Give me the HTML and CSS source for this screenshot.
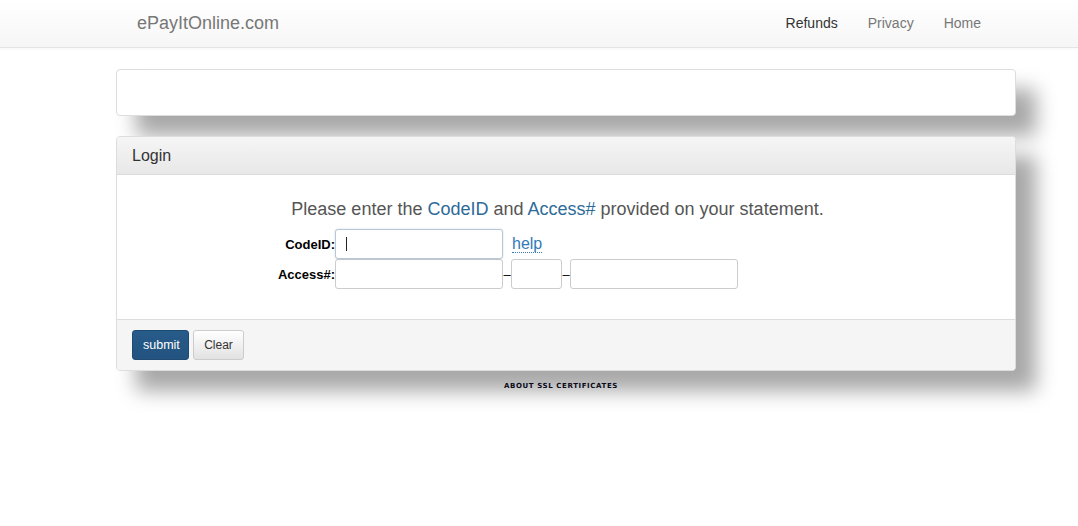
FILE: index.html
```html
<!DOCTYPE html>
<html>
<head>
<meta charset="utf-8">
<title>ePayItOnline.com</title>
<link rel="stylesheet" href="styles.css">
</head>
<body>
<nav class="navbar">
  <div class="nav-inner">
    <a class="brand" href="#">ePayItOnline.com</a>
    <ul class="nav-links">
      <li><a class="active" href="#">Refunds</a></li>
      <li><a href="#">Privacy</a></li>
      <li><a href="#">Home</a></li>
    </ul>
  </div>
</nav>
<main class="container">
  <div class="panel panel-empty"></div>
  <div class="panel panel-login">
    <div class="panel-heading">Login</div>
    <div class="panel-body">
      <p class="intro">Please enter the <span class="hl">CodeID</span> and <span class="hl">Access#</span> provided on your statement.</p>
      <div class="form-grid">
        <label class="lbl" for="codeid">CodeID:</label>
        <div class="row">
          <span class="caret-wrap"><input id="codeid" class="inp inp-focus inp-wide" type="text"><span class="caret"></span></span>
          <a class="help" href="#">help</a>
        </div>
        <label class="lbl" for="acc1">Access#:</label>
        <div class="row">
          <input id="acc1" class="inp inp-wide" type="text"><span class="dash">–</span><input class="inp inp-small" type="text"><span class="dash">–</span><input class="inp inp-wide" type="text">
        </div>
      </div>
    </div>
    <div class="panel-footer">
      <button class="btn btn-primary">submit</button><button class="btn btn-default">Clear</button>
    </div>
  </div>
  <div class="ssl">ABOUT SSL CERTIFICATES</div>
</main>
</body>
</html>
```
FILE: styles.css
```css
* { box-sizing: border-box; }
html, body { margin: 0; padding: 0; background: #fff; }
html, body { min-height: 526px; }
body { font-family: "Liberation Sans", Arial, sans-serif; font-size: 14px; color: #333; }

.navbar {
  height: 48px;
  background: linear-gradient(to bottom, #ffffff 0%, #f6f6f6 100%);
  border-bottom: 1px solid #e4e4e4;
  box-shadow: 0 1px 3px rgba(0,0,0,0.04);
}
.nav-inner {
  width: 900px;
  margin-left: 116px;
  height: 47px;
  display: flex;
  align-items: center;
  justify-content: space-between;
}
.brand {
  padding-left: 21px;
  font-size: 18px;
  color: #777;
  text-decoration: none;
  margin-top: -1px;
}
.nav-links {
  list-style: none;
  margin: -1px 0 0 0;
  padding: 0 20px 0 0;
  display: flex;
}
.nav-links a {
  display: block;
  padding: 0 15px;
  font-size: 14px;
  color: #777;
  text-decoration: none;
}
.nav-links a.active { color: #333; }

.container {
  width: 900px;
  margin-left: 116px;
  padding-top: 21px;
  padding-bottom: 100px;
}
.panel {
  background: #fff;
  border: 1px solid #ddd;
  border-radius: 4px;
  box-shadow: 20px 20px 20px #a8a8a8;
}
.panel-empty { height: 47px; margin-bottom: 20px; }
.panel-heading {
  height: 38px;
  padding: 0 15px;
  display: flex;
  align-items: center;
  font-size: 16px;
  color: #333;
  background: linear-gradient(to bottom, #f5f5f5 0%, #e8e8e8 100%);
  border-bottom: 1px solid #ddd;
  border-radius: 3px 3px 0 0;
}
.panel-body {
  height: 144px;
  padding-top: 24px;
}
.intro {
  margin: 0 0 10px 0;
  text-align: center;
  font-size: 18px;
  line-height: 20px;
  color: #555;
  padding-right: 17px;
}
.intro .hl { color: #2d6a98; }

.form-grid {
  margin-left: 159px;
  display: grid;
  grid-template-columns: 59px auto;
  align-items: center;
}
.lbl {
  text-align: right;
  font-weight: bold;
  font-size: 13px;
  color: #000;
}
.row { display: flex; align-items: center; height: 30px; }
.inp {
  height: 30px;
  border: 1px solid #ccc;
  border-radius: 3px;
  font-size: 14px;
  padding: 0 8px;
  background: #fff;
  outline: none;
  margin: 0;
}
.inp-wide { width: 168px; }
.inp-small { width: 51px; }
.inp-focus {
  border-color: #b9c8d6;
  box-shadow: 0 0 2px rgba(102,140,180,0.35);
}
.caret-wrap { position: relative; display: inline-block; height: 30px; }
.caret {
  position: absolute;
  left: 11px;
  top: 8px;
  width: 1px;
  height: 14px;
  background: #222;
}
.dash {
  width: 8px;
  text-align: center;
  font-size: 13px;
  color: #000;
}
.help {
  margin-left: 9px;
  font-size: 16px;
  color: #337ab7;
  text-decoration: none;
  border-bottom: 1px dotted #337ab7;
  line-height: 16px;
  margin-top: 1px;
}

.panel-footer {
  height: 51px;
  padding: 10px 15px 0;
  background: #f5f5f5;
  border-top: 1px solid #ddd;
  border-radius: 0 0 3px 3px;
  display: flex;
  gap: 4px;
}
.btn {
  height: 30px;
  padding: 0 10px;
  font-family: "Liberation Sans", Arial, sans-serif;
  font-size: 12px;
  border-radius: 3px;
  cursor: pointer;
  margin: 0;
}
.btn-primary {
  background: linear-gradient(to bottom, #275b89 0%, #235380 100%);
  border: 1px solid #1f4b73;
  color: #fff;
  width: 57px;
  font-size: 12.5px;
}
.btn-default {
  background: linear-gradient(to bottom, #ffffff 0%, #e2e2e2 100%);
  border: 1px solid #cccccc;
  color: #333;
  width: 51px;
}

.ssl {
  margin-top: 11px;
  text-align: center;
  font-family: "DejaVu Sans", Verdana, sans-serif;
  font-weight: bold;
  font-size: 7px;
  letter-spacing: 0.6px;
  color: #0a0a1a;
  padding-right: 10px;
  line-height: 9px;
}
```
